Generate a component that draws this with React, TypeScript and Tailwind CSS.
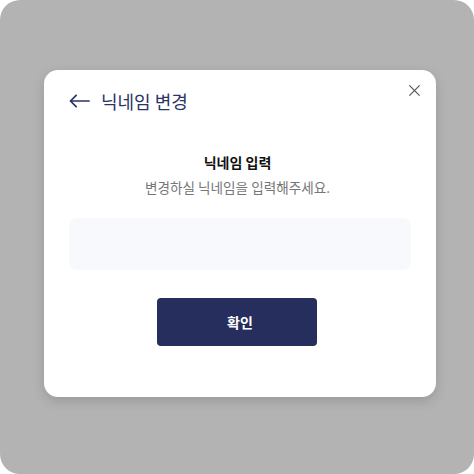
import React from 'react'

export default function App(): React.ReactElement {
  return (
    <div
      className="w-[474px] h-[474px] bg-white"
      style={{ fontFamily: '"Noto Sans CJK KR", "Noto Sans", sans-serif' }}
    >
      <div className="w-full h-full bg-[#b3b3b3] rounded-[20px] pl-[44px] pt-[70px]">
        <div className="relative w-[392px] h-[327px] bg-white rounded-[14px] shadow-[0_4px_12px_rgba(0,0,0,0.15)] px-[25px] pt-[20px] flex flex-col">
          {/* Close */}
          <button className="absolute top-[14px] right-[15px] w-[13px] h-[13px] flex items-center justify-center">
            <svg viewBox="0 0 14 14" className="w-[13px] h-[13px]" fill="none" stroke="#555" strokeWidth="1.3">
              <path d="M1.5 1.5l11 11M12.5 1.5l-11 11" />
            </svg>
          </button>

          {/* Header */}
          <div className="flex items-center gap-[11px] h-[22px]">
            <svg viewBox="0 0 22 14" className="w-[21px] h-[14px]" fill="none" stroke="#2b3466" strokeWidth="1.8" strokeLinecap="round" strokeLinejoin="round">
              <path d="M21 7H1.5M7.5 1L1.5 7l6 6" />
            </svg>
            <span className="text-[18px] leading-[22px] text-[#2b3466]">닉네임 변경</span>
          </div>

          {/* Body */}
          <div className="flex flex-col items-center mt-[40px] pr-[5px]">
            <p className="text-[14px] leading-[20px] font-bold text-[#111]">닉네임 입력</p>
            <p className="text-[13.6px] leading-[20px] text-[#777] mt-[5px]">변경하실 닉네임을 입력해주세요.</p>
          </div>

          <input className="mt-[21px] w-full h-[52px] bg-[#f8f9fd] rounded-[8px] outline-none px-4 text-[14px]" />

          <div className="flex mt-[28px] pl-[88px]">
            <button className="w-[160px] h-[48px] bg-[#252e5c] rounded-[4px] pl-[6px] text-white text-[14px] font-bold">
              확인
            </button>
          </div>
        </div>
      </div>
    </div>
  )
}
